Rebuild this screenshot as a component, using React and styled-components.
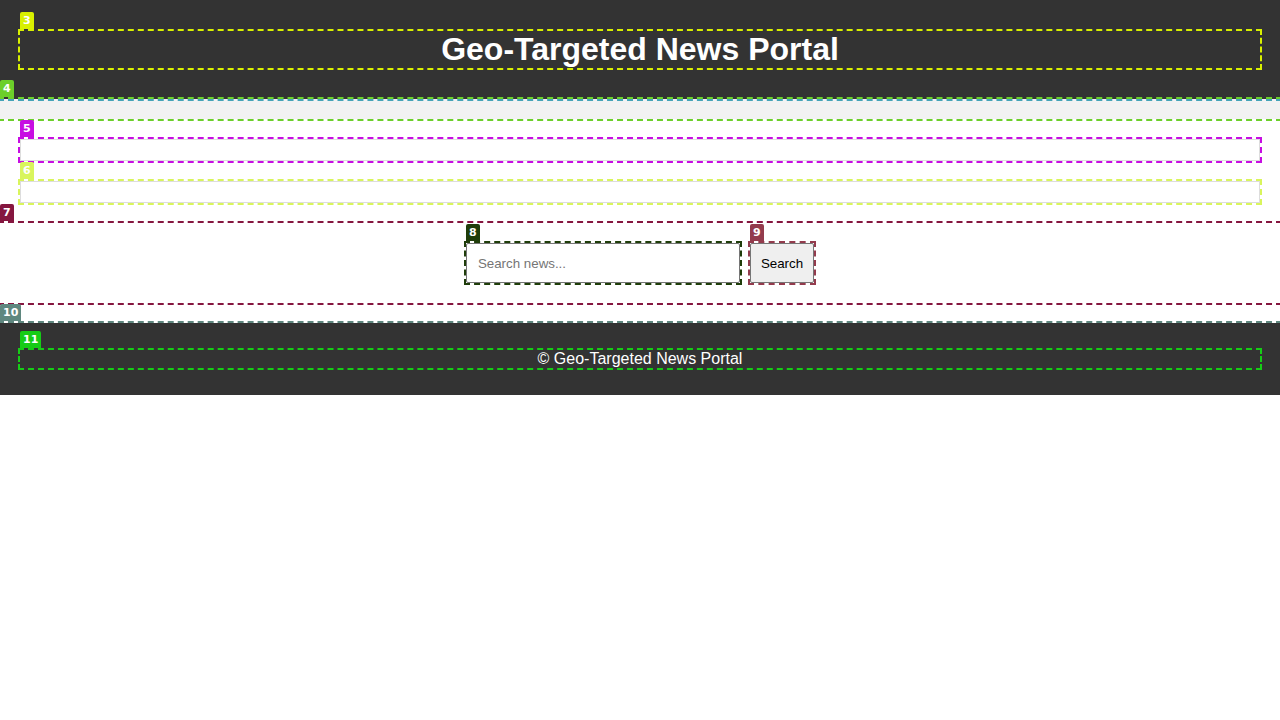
import { styled, createGlobalStyle } from "styled-components";

const GlobalStyle = createGlobalStyle`
  body {
    margin: 0;
    font-family: "Liberation Sans", Arial, sans-serif;
    background: #fff;
  }
`;

// debug frame: dashed outline + numbered tag above its top-left corner
const Frame = styled.div`
  position: relative;
  outline: 2px dashed ${(p) => p.$c};
`;

const Tag = styled.span`
  position: absolute;
  left: 0;
  top: -19px;
  height: 17px;
  padding: 0 3px;
  min-width: 8px;
  box-sizing: content-box;
  background: ${(p) => p.$c};
  color: #fff;
  font: 600 11px/17px "DejaVu Sans", "Liberation Sans", sans-serif;
  border-radius: 2px 2px 0 0;
  z-index: 5;
`;

const Header = styled.header`
  position: relative;
  background: #333;
  padding: 10px 20px;

  &::after {
    content: "";
    position: absolute;
    inset: 0;
    outline: 2px dashed #45a3b8;
    pointer-events: none;
    z-index: 2;
  }
`;

const Title = styled.h1`
  margin: 21px 0;
  font-size: 32px;
  line-height: 37px;
  color: #fff;
  text-align: center;
`;

const Nav = styled.nav`
  background: #f2f2f2;
  padding: 10px;
`;

const Main = styled.main`
  display: flex;
  flex-direction: column;
  gap: 20px;
  padding: 20px;
`;

const Section = styled.section`
  border: 1px solid #ddd;
  padding: 10px;
`;

const SearchBar = styled.div`
  display: flex;
  justify-content: center;
  gap: 10px;
  padding: 20px;
  margin-bottom: 20px;
`;

const SearchInput = styled.input`
  box-sizing: border-box;
  width: 274px;
  height: 40px;
  padding: 0 11px;
  font: 13.33px "Liberation Sans", Arial, sans-serif;
  border: 1px solid #767676;
  border-radius: 2px;
  &::placeholder {
    color: #757575;
  }
`;

const SearchButton = styled.button`
  box-sizing: border-box;
  height: 40px;
  padding: 0 10px;
  font: 13.33px "Liberation Sans", Arial, sans-serif;
  color: #000;
  background: #efefef;
  border: 1px solid #767676;
  border-radius: 2px;
`;

const Footer = styled.footer`
  background: #333;
  padding: 11px 20px;
`;

const Copy = styled.p`
  margin: 16px 0;
  color: #fff;
  font-size: 16px;
  text-align: center;
`;

const App = () => {
  return (
    <>
      <GlobalStyle />
      <Header>
        <Frame $c="#d8f000">
          <Tag $c="#d8f000">3</Tag>
          <Title>Geo-Targeted News Portal</Title>
        </Frame>
      </Header>
      <Frame $c="#6ccf2a">
        <Tag $c="#6ccf2a">4</Tag>
        <Nav />
      </Frame>
      <Main>
        <Frame $c="#c70ee2">
          <Tag $c="#c70ee2">5</Tag>
          <Section />
        </Frame>
        <Frame $c="#d9f55c">
          <Tag $c="#d9f55c">6</Tag>
          <Section />
        </Frame>
      </Main>
      <Frame $c="#85163f">
        <Tag $c="#85163f">7</Tag>
        <SearchBar>
          <Frame $c="#1f3d0a">
            <Tag $c="#1f3d0a">8</Tag>
            <SearchInput type="text" placeholder="Search news..." />
          </Frame>
          <Frame $c="#933b4d">
            <Tag $c="#933b4d">9</Tag>
            <SearchButton>Search</SearchButton>
          </Frame>
        </SearchBar>
      </Frame>
      <Frame $c="#5f877f">
        <Tag $c="#5f877f">10</Tag>
        <Footer>
          <Frame $c="#16cc16">
            <Tag $c="#16cc16">11</Tag>
            <Copy>© Geo-Targeted News Portal</Copy>
          </Frame>
        </Footer>
      </Frame>
    </>
  );
};

export default App;
